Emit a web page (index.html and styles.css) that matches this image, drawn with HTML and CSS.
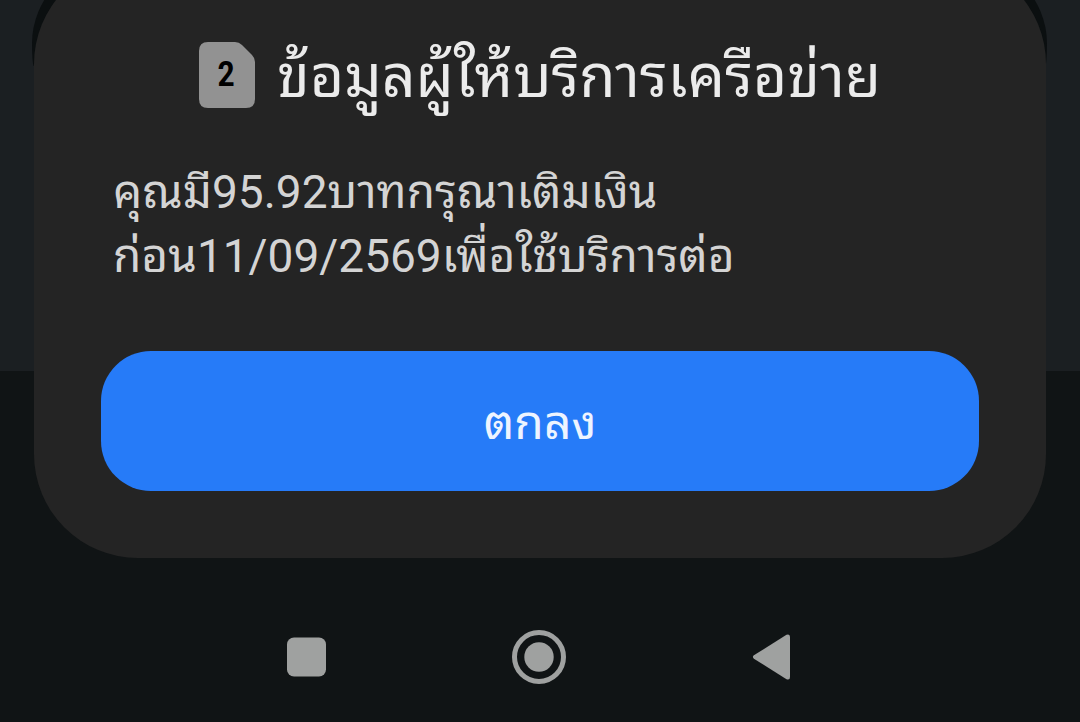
FILE: index.html
```html
<!DOCTYPE html>
<html lang="th">
<head>
<meta charset="utf-8">
<meta name="viewport" content="width=device-width, initial-scale=1">
<title>ข้อมูลผู้ให้บริการเครือข่าย</title>
<link rel="stylesheet" href="styles.css">
</head>
<body>
<main class="sheet" role="dialog" aria-labelledby="sheet-title">
  <header class="sheet-header">
    <span class="sim">
      <svg class="sim-shape" viewBox="0 0 56 66" aria-hidden="true"><path d="M9 0H36Q40 0 43 3L53 13Q56 16 56 20V57Q56 66 47 66H9Q0 66 0 57V9Q0 0 9 0Z"/></svg>
      <span class="sim-number">2</span>
    </span>
    <h1 class="title" id="sheet-title">ข้อมูลผู้ให้บริการเครือข่าย</h1>
  </header>
  <p class="message">คุณมี95.92บาทกรุณาเติมเงิน<br>ก่อน11/09/2569เพื่อใช้บริการต่อ</p>
  <button class="confirm" type="button">ตกลง</button>
</main>
<nav class="navbar" aria-label="System">
  <button class="nav-button" type="button" aria-label="Recent apps"><svg class="nav-icon" viewBox="0 0 56 56"><rect x="8" y="8.500" width="39" height="39" rx="7"/></svg></button>
  <button class="nav-button" type="button" aria-label="Home"><svg class="nav-icon" viewBox="0 0 56 56"><circle class="ring" cx="27" cy="28" r="24.5"/><circle cx="27" cy="28" r="14.7"/></svg></button>
  <button class="nav-button" type="button" aria-label="Back"><svg class="nav-icon" viewBox="0 0 56 56"><path d="M8.900 26.300 41.500 5.800Q45 4.500 45 8V48Q45 51.500 41.500 50.200L8.900 29.700Q6.800 28 8.900 26.300Z"/></svg></button>
</nav>
</body>
</html>
```
FILE: styles.css
```css
* { box-sizing: border-box; }

body {
  margin: 0;
  min-height: 100vh;
  display: flex;
  flex-direction: column;
  overflow: hidden;
  background: linear-gradient(#1b1f22 371px, #101415 371px);
  font-family: Roboto, "Noto Sans Thai Looped", "Droid Sans Thai", Waree, Loma, Garuda, Umpush, "Noto Sans Thai", sans-serif;
}

.sheet {
  position: relative;
  isolation: isolate;
  margin: -40px 34px 0;
  padding: 72px 67px 67px;
  display: flex;
  flex-direction: column;
}

.sheet::before,
.sheet::after {
  content: "";
  position: absolute;
  z-index: -1;
}

.sheet::before {
  inset: 0 -1px auto -2px;
  height: 106px;
  border-radius: 90px 90px 2px 2px / 90px 90px 24px 24px;
  background: #0b0f10;
}

.sheet::after {
  inset: 0;
  border-radius: 104px;
  background: #242424;
}

.sheet-header {
  display: flex;
  justify-content: center;
  align-items: center;
  gap: 22px;
  height: 86px;
}

.sim {
  display: grid;
  place-items: center;
  width: 56px;
  height: 66px;
}

.sim-shape,
.sim-number { grid-area: 1 / 1; }

.sim-shape {
  width: 56px;
  height: 66px;
  fill: #929292;
}

.sim-number {
  padding-right: 2px;
  color: #000;
  font-family: "Roboto Condensed", Roboto, sans-serif;
  font-size: 35px;
  font-weight: 600;
  line-height: 36px;
}

.title {
  margin: 0;
  padding-top: 4px;
  color: #ebebeb;
  font-size: 59px;
  font-weight: 400;
  line-height: 82px;
  white-space: nowrap;
}

.message {
  margin: 42px 12px 0;
  color: #d4d4d4;
  font-size: 46px;
  line-height: 64px;
}

.confirm {
  margin-top: 63px;
  height: 140px;
  padding: 0 0 8px;
  border: 0;
  border-radius: 50px;
  background: #267bf8;
  color: #eef4ff;
  font: inherit;
  font-size: 48px;
}

.navbar {
  display: flex;
  justify-content: center;
  gap: 177px;
  padding: 71px 0 36px;
}

.nav-button {
  padding: 0;
  border: 0;
  background: none;
}

.nav-icon {
  display: block;
  width: 56px;
  height: 56px;
  fill: #9fa1a0;
}

.ring {
  fill: none;
  stroke: #9fa1a0;
  stroke-width: 5;
}
```
